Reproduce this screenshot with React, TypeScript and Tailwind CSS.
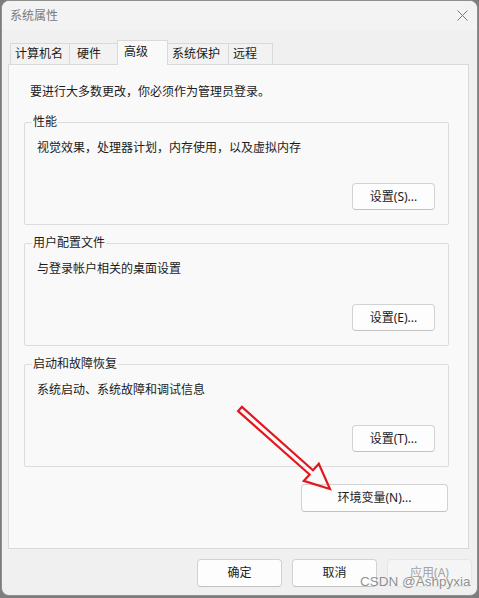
import React from "react";

const font = "font-['Noto_Sans','Noto_Sans_CJK_SC',sans-serif]";

function Btn({ children, w, disabled }: { children: React.ReactNode; w: string; disabled?: boolean }) {
  return (
    <div
      className={
        "flex h-[28px] items-center justify-center rounded-[4px] border text-[12px] leading-4 " +
        w +
        (disabled
          ? " border-[#e6e6e6] bg-[#f5f5f5] text-[#a3a3a3]"
          : " border-[#d2d2d2] border-b-[#c2c2c2] bg-[#fdfdfd] text-[#1b1b1b]")
      }
    >
      {children}
    </div>
  );
}

function Group({ title, desc, btn }: { title: string; desc: string; btn: string }) {
  return (
    <fieldset className="ml-[15px] h-[111px] w-[425px] rounded-[2px] border border-[#dcdcdc]">
      <legend className="ml-[7px] px-[1px] text-[12px] leading-4 text-[#1b1b1b]">{title}</legend>
      <div className="pl-[12px] pt-[10px] text-[12px] leading-4 text-[#1b1b1b]">{desc}</div>
      <div className="mt-[27px] flex justify-end pr-[13px]">
        <div className="flex h-[27px] w-[83px] items-center justify-center rounded-[4px] border border-[#d2d2d2] border-b-[#c2c2c2] bg-[#fdfdfd] text-[12px] leading-4 text-[#1b1b1b]">
          {btn}
        </div>
      </div>
    </fieldset>
  );
}

const tabs = [
  { t: "计算机名", w: "w-[60px]", pl: "pl-[4px]" },
  { t: "硬件", w: "w-[49px]", pl: "pl-[7px]" },
  { t: "高级", w: "w-[51px]", pl: "pl-[6px]", sel: true },
  { t: "系统保护", w: "w-[62px]", pl: "pl-[4px]" },
  { t: "远程", w: "w-[45px]", pl: "pl-[4px]" },
];

export default function App() {
  return (
    <div className={"relative h-[598px] w-[479px] overflow-hidden bg-[#7d7d7d] pl-[1px] " + font}>
      <div className="flex h-[596px] w-[477px] flex-col rounded-[8px] border border-[#8f8f8f] bg-[#f0f0f0]">
        {/* title bar */}
        <div className="flex h-[29px] items-center justify-between rounded-t-[8px] bg-[#f3f3f3] pl-[8px] pr-[9px]">
          <span className="text-[12px] leading-4 text-[#7a7a7a]">系统属性</span>
          <svg width="11" height="11" viewBox="0 0 11 11">
            <path d="M0.5 0.5 L10.5 10.5 M10.5 0.5 L0.5 10.5" stroke="#7a7a7a" strokeWidth="1" fill="none" />
          </svg>
        </div>
        {/* tabs */}
        <div className="ml-[8px] mt-[10px] flex h-[24px] items-end">
          {tabs.map((tb, i) => (
            <div
              key={tb.t}
              className={
                "flex items-center border border-b-0 border-[#d9d9d9] text-[12px] leading-4 text-[#1b1b1b] " +
                tb.w +
                " " +
                tb.pl +
                (i > 0 ? " -ml-px" : "") +
                (tb.sel
                  ? " relative z-10 -mb-px h-[25px] bg-[#f9f9f9] pb-[2px]"
                  : " h-[21px] bg-[#f2f2f2]")
              }
            >
              {tb.t}
            </div>
          ))}
        </div>
        {/* panel */}
        <div className="ml-[6px] flex h-[485px] w-[461px] flex-col border border-[#d9d9d9] bg-[#f9f9f9]">
          <div className="mt-[19px] pl-[21px] text-[12px] leading-4 text-[#1b1b1b]">
            要进行大多数更改，你必须作为管理员登录。
          </div>
          <div className="mt-[14px]">
            <Group title="性能" desc="视觉效果，处理器计划，内存使用，以及虚拟内存" btn="设置(S)..." />
          </div>
          <div className="mt-[10px]">
            <Group title="用户配置文件" desc="与登录帐户相关的桌面设置" btn="设置(E)..." />
          </div>
          <div className="mt-[10px]">
            <Group title="启动和故障恢复" desc="系统启动、系统故障和调试信息" btn="设置(T)..." />
          </div>
          <div className="mt-[17px] flex justify-end pr-[20px]">
            <Btn w="w-[147px]">环境变量(N)...</Btn>
          </div>
        </div>
        {/* bottom buttons */}
        <div className="ml-[195px] mt-[10px] flex gap-[10px]">
          <Btn w="w-[85px]">确定</Btn>
          <Btn w="w-[85px]">取消</Btn>
          <Btn w="w-[85px]" disabled>
            应用(A)
          </Btn>
        </div>
      </div>

      {/* red annotation arrow */}
      <svg className="pointer-events-none absolute left-0 top-0" width="479" height="598" viewBox="0 0 479 598">
        <path
          d="M241.9 406.9 L313.0 470.2 L318.8 463.8 L330 489 L303.8 480.9 L309.6 474.5 L238.1 411.1 Z"
          fill="none"
          stroke="#e3181f"
          strokeWidth="2.2"
          strokeLinejoin="miter"
        />
      </svg>

      {/* watermark */}
      <div className="pointer-events-none absolute left-[360px] top-[574px] font-['Liberation_Sans',Arial,sans-serif] text-[13.5px] leading-4 text-[rgba(110,110,110,0.75)]">
        CSDN @Ashpyxia
      </div>
    </div>
  );
}
